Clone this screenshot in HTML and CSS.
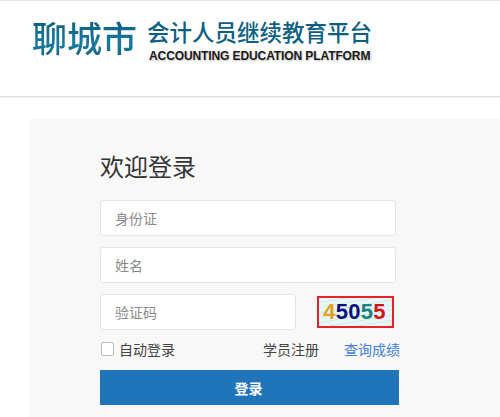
FILE: index.html
```html
<!DOCTYPE html>
<html lang="zh">
<head>
<meta charset="utf-8">
<title>会计人员继续教育平台</title>
<link rel="stylesheet" href="styles.css">
</head>
<body>
<header class="header">
  <div class="logo">
    <div class="logo-city">聊城市</div>
    <div class="logo-text">
      <div class="logo-cn">会计人员继续教育平台</div>
      <div class="logo-en">ACCOUNTING EDUCATION PLATFORM</div>
    </div>
  </div>
</header>
<main class="panel">
  <form class="form">
    <h1 class="title">欢迎登录</h1>
    <input class="field" type="text" placeholder="身份证">
    <input class="field" type="text" placeholder="姓名">
    <div class="captcha-row">
      <input class="field field-code" type="text" placeholder="验证码">
      <div class="captcha">
        <span class="d1">4</span><span class="d2">5</span><span class="d2">0</span><span class="d3">5</span><span class="d4">5</span>
      </div>
    </div>
    <div class="options">
      <label class="auto"><span class="check"></span>自动登录</label>
      <a class="link-dark">学员注册</a>
      <a class="link-blue">查询成绩</a>
    </div>
    <button class="submit" type="button">登录</button>
  </form>
</main>
</body>
</html>
```
FILE: styles.css
```css
* { box-sizing: border-box; }
html, body { margin: 0; padding: 0; height: 417px; overflow: hidden; background: #fff; }
body { font-family: "Noto Sans CJK SC", "Liberation Sans", sans-serif; color: #333; }
.header { height: 97px; border-top: 1px solid #e6e6e6; border-bottom: 1px solid #e2e2e2; box-shadow: 0 1px 1px #f0f0f0; }
.logo { display: flex; padding: 15px 0 0 32px; }
.logo-city { width: 115px; font-size: 35px; line-height: 42px; font-weight: 500; color: #0f6688; background: linear-gradient(180deg, #0a5c80 0%, #1a7a9e 60%, #0c5a7c 100%); -webkit-background-clip: text; background-clip: text; -webkit-text-fill-color: transparent; }
.logo-text { width: 230px; }
.logo-cn { font-size: 22.5px; line-height: 29px; font-weight: 500; color: #0c5f84; white-space: nowrap; margin-top: 1px; }
.logo-en { font-family: "Liberation Sans", sans-serif; font-size: 12px; line-height: 14px; font-weight: 700; color: #1a1a1a; letter-spacing: -0.1px; margin: 3px 0 0 2px; white-space: nowrap; text-shadow: 1px 1px 2px #bbb; }
.panel { margin: 22px 0 0 30px; height: 298px; background: #f8f8f8; padding-top: 29px; }
.form { width: 300px; margin-left: 70px; display: flex; flex-direction: column; }
.title { margin: 0 0 16px; font-size: 24px; line-height: 36px; font-weight: 400; color: #333; }
.field { display: block; width: 296px; height: 36px; margin: 0 0 11px; padding: 0 14px; background: #fff; border: 1px solid #e6e6ea; border-radius: 3px; font-family: inherit; font-size: 14px; outline: none; }
.field::placeholder { color: #8a8a8a; opacity: 1; }
.captcha-row { display: flex; align-items: center; justify-content: space-between; width: 294px; }
.field-code { width: 196px; margin: 0; }
.captcha { width: 77px; height: 32px; padding-right: 2px; border: 2px solid #e8202a; background-color: #e4f6f6; background-image: repeating-linear-gradient(170deg, transparent 0 4px, #dbe8e6 4px 5px); font-family: "Liberation Sans", sans-serif; font-size: 22px; line-height: 28px; letter-spacing: 0.3px; font-weight: 700; text-align: center; }
.d1 { color: #e0a020; }
.d2 { color: #10107a; }
.d3 { color: #1f8080; }
.d4 { color: #d8101c; }
.options { display: flex; align-items: center; height: 20px; margin-top: 9px; font-size: 14px; line-height: 20px; color: #444; }
.auto { display: flex; align-items: center; width: 163px; }
.check { width: 13px; height: 14px; margin: 0 5px 0 1px; background: #fff; border: 1px solid #bbb; border-radius: 2px; }
.link-dark { width: 81px; }
.link-blue { color: #3f7fe0; }
.submit { width: 299px; height: 35px; margin-top: 11px; padding: 0 2px 0 0; border: 0; background: #2074ba; color: #fff; font-family: inherit; font-size: 14px; font-weight: 700; }
```
